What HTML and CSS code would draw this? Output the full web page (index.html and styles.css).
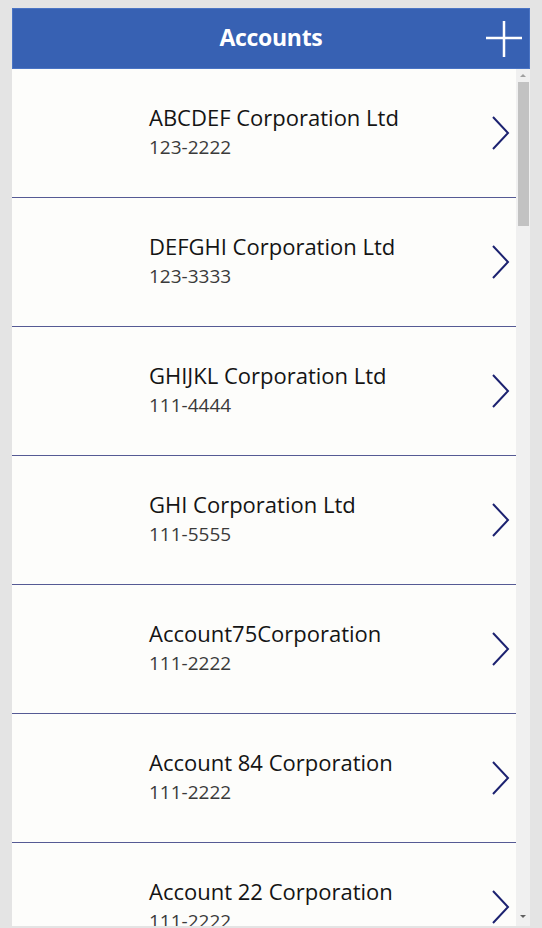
FILE: index.html
```html
<!DOCTYPE html>
<html>
<head>
<meta charset="utf-8">
<link rel="stylesheet" href="styles.css">
</head>
<body>
<div class="app">
  <header class="header">
    <div class="spacer"></div>
    <h1 class="title">Accounts</h1>
    <div class="actions">
      <svg class="plus" width="36" height="36" viewBox="0 0 36 36"><path d="M18 0V36M0 17H36" stroke="#fff" stroke-width="2.5" fill="none"/></svg>
    </div>
  </header>
  <div class="body">
    <div class="list">
      <div class="row"><div class="text"><div class="name">ABCDEF Corporation Ltd</div><div class="phone">123-2222</div></div><svg class="chev" width="18" height="34" viewBox="0 0 18 34"><path d="M1 1L16 17L1 33" stroke="#1c2270" stroke-width="2" fill="none"/></svg></div>
      <div class="row"><div class="text"><div class="name">DEFGHI Corporation Ltd</div><div class="phone">123-3333</div></div><svg class="chev" width="18" height="34" viewBox="0 0 18 34"><path d="M1 1L16 17L1 33" stroke="#1c2270" stroke-width="2" fill="none"/></svg></div>
      <div class="row"><div class="text"><div class="name">GHIJKL Corporation Ltd</div><div class="phone">111-4444</div></div><svg class="chev" width="18" height="34" viewBox="0 0 18 34"><path d="M1 1L16 17L1 33" stroke="#1c2270" stroke-width="2" fill="none"/></svg></div>
      <div class="row"><div class="text"><div class="name">GHI Corporation Ltd</div><div class="phone">111-5555</div></div><svg class="chev" width="18" height="34" viewBox="0 0 18 34"><path d="M1 1L16 17L1 33" stroke="#1c2270" stroke-width="2" fill="none"/></svg></div>
      <div class="row"><div class="text"><div class="name">Account75Corporation</div><div class="phone">111-2222</div></div><svg class="chev" width="18" height="34" viewBox="0 0 18 34"><path d="M1 1L16 17L1 33" stroke="#1c2270" stroke-width="2" fill="none"/></svg></div>
      <div class="row"><div class="text"><div class="name">Account 84 Corporation</div><div class="phone">111-2222</div></div><svg class="chev" width="18" height="34" viewBox="0 0 18 34"><path d="M1 1L16 17L1 33" stroke="#1c2270" stroke-width="2" fill="none"/></svg></div>
      <div class="row"><div class="text"><div class="name">Account 22 Corporation</div><div class="phone">111-2222</div></div><svg class="chev" width="18" height="34" viewBox="0 0 18 34"><path d="M1 1L16 17L1 33" stroke="#1c2270" stroke-width="2" fill="none"/></svg></div>
    </div>
    <div class="scrollbar">
      <div class="arrow up"></div>
      <div class="thumb"></div>
      <div class="track"></div>
      <div class="arrow down"></div>
    </div>
  </div>
</div>
</body>
</html>
```
FILE: styles.css
```css
html, body {
  margin: 0;
  padding: 0;
  height: 100%;
  overflow: hidden;
}
body {
  background: #e4e4e4;
  font-family: "Open Sans", "Noto Sans", sans-serif;
}
.app {
  margin: 8px 0 0 12px;
  width: 518px;
  height: 918px;
  display: flex;
  flex-direction: column;
  background: #fdfdfb;
}
.header {
  height: 61px;
  flex: none;
  background: #3761b3;
  display: grid;
  grid-template-columns: 1fr auto 1fr;
  align-items: center;
  box-shadow: inset 0 0 0 1px #4a74c4;
}
.title {
  margin: 0 0 3px;
  color: #fff;
  font-size: 23px;
  font-weight: 700;
  line-height: 30px;
  letter-spacing: -0.3px;
}
.actions {
  display: flex;
  justify-content: flex-end;
  padding-right: 8px;
}
.plus {
  display: block;
}
.body {
  flex: 1;
  display: flex;
  min-height: 0;
}
.list {
  flex: 1;
  overflow: hidden;
}
.row {
  height: 128px;
  border-bottom: 1px solid #555a94;
  display: flex;
  align-items: center;
  padding: 0 6px 0 137px;
}
.text {
  flex: 1;
  padding-bottom: 2px;
}
.name {
  font-size: 22px;
  line-height: 30px;
  color: #141414;
}
.phone {
  font-size: 19px;
  line-height: 30px;
  color: #3a3a3a;
}
.chev {
  display: block;
  flex: none;
}
.scrollbar {
  width: 14px;
  flex: none;
  background: #f0f0f0;
  display: flex;
  flex-direction: column;
  align-items: center;
}
.arrow {
  width: 0;
  height: 0;
  border-left: 3px solid transparent;
  border-right: 3px solid transparent;
}
.arrow.up {
  margin-top: 5px;
  border-bottom: 3px solid #a0a0a0;
}
.arrow.down {
  margin-bottom: 8px;
  border-top: 3px solid #606060;
}
.thumb {
  margin-top: 5px;
  width: 11px;
  height: 144px;
  background: #c2c2c2;
}
.track {
  flex: 1;
}
```
